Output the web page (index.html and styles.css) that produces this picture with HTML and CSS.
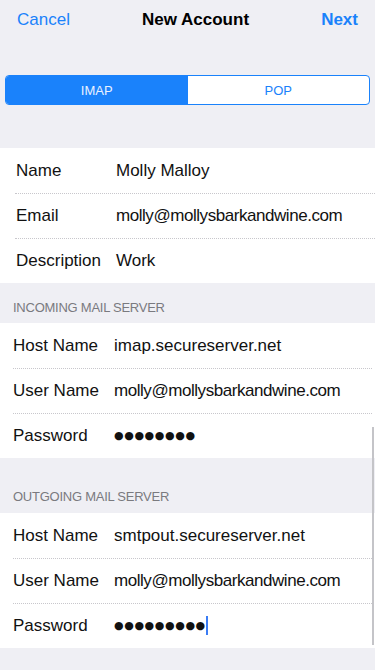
FILE: index.html
```html
<!DOCTYPE html>
<html>
<head>
<meta charset="utf-8">
<link rel="stylesheet" href="styles.css">
</head>
<body>
<div class="screen">
  <header class="nav">
    <span class="nav-btn">Cancel</span>
    <span class="nav-title">New Account</span>
    <span class="nav-btn nav-next">Next</span>
  </header>

  <div class="segmented">
    <div class="seg seg-active">IMAP</div>
    <div class="seg">POP</div>
  </div>

  <section class="group group-first">
    <div class="row"><span class="label">Name</span><span class="value">Molly Malloy</span></div>
    <div class="row"><span class="label">Email</span><span class="value email">molly@mollysbarkandwine.com</span></div>
    <div class="row"><span class="label">Description</span><span class="value">Work</span></div>
  </section>

  <div class="section-header sh-incoming">INCOMING MAIL SERVER</div>
  <section class="group group-server">
    <div class="row"><span class="label">Host Name</span><span class="value">imap.secureserver.net</span></div>
    <div class="row"><span class="label">User Name</span><span class="value email">molly@mollysbarkandwine.com</span></div>
    <div class="row"><span class="label">Password</span><span class="value dots">●●●●●●●●</span></div>
  </section>

  <div class="section-header sh-outgoing">OUTGOING MAIL SERVER</div>
  <section class="group group-server">
    <div class="row"><span class="label">Host Name</span><span class="value">smtpout.secureserver.net</span></div>
    <div class="row"><span class="label">User Name</span><span class="value email">molly@mollysbarkandwine.com</span></div>
    <div class="row"><span class="label">Password</span><span class="value dots">●●●●●●●●●<span class="cursor"></span></span></div>
  </section>

  <div class="scroll-indicator"></div>
</div>
</body>
</html>
```

FILE: styles.css
```css
html, body {
  margin: 0;
  padding: 0;
  background: #efeff4;
}

.screen {
  position: relative;
  width: 375px;
  height: 670px;
  overflow: hidden;
  background: #efeff4;
  font-family: "Liberation Sans", Arial, sans-serif;
  color: #000;
}

.nav {
  height: 40px;
  display: flex;
  align-items: center;
  justify-content: space-between;
  padding: 0 17px;
}

.nav-btn {
  font-size: 17px;
  color: #1a82fb;
}

.nav-next {
  font-weight: bold;
}

.nav-title {
  font-size: 17px;
  font-weight: bold;
  color: #000;
}

.segmented {
  margin: 35px 5px 0 5px;
  height: 30px;
  box-sizing: border-box;
  border: 1px solid #1a82fb;
  border-radius: 4px;
  display: flex;
  overflow: hidden;
  background: #fff;
}

.seg {
  flex: 1;
  display: flex;
  align-items: center;
  justify-content: center;
  font-size: 13px;
  color: #1a82fb;
}

.seg-active {
  background: #1a82fb;
  color: #e8f1ff;
}

.group {
  background: #fff;
}

.group-first {
  margin-top: 43px;
}

.row {
  height: 45px;
  display: flex;
  align-items: center;
  font-size: 17px;
  position: relative;
}

.row + .row::before {
  content: "";
  position: absolute;
  top: 0;
  left: 15px;
  right: 0;
  border-top: 1px dotted #c8c7cc;
}

.group-first .row {
  padding-left: 16px;
}

.group-first .label {
  width: 100px;
}

.group-server .row {
  padding-left: 13px;
}

.group-server .row + .row::before {
  left: 13px;
  right: 3px;
}

.group-server .label {
  width: 101px;
}

.label {
  color: #111;
}

.value {
  color: #111;
  white-space: nowrap;
}

.email {
  letter-spacing: -0.45px;
}

.dots {
  font-family: "DejaVu Sans", sans-serif;
  font-size: 11px;
  letter-spacing: 0.6px;
  display: flex;
  align-items: center;
}

.cursor {
  display: inline-block;
  width: 2px;
  height: 19px;
  background: #3a7cf5;
}

.section-header {
  font-size: 13px;
  letter-spacing: -0.25px;
  color: #7a7a7f;
  padding-left: 13px;
  box-sizing: border-box;
  display: flex;
  align-items: flex-end;
}

.sh-incoming {
  height: 40px;
  padding-bottom: 8px;
}

.sh-outgoing {
  height: 55px;
  padding-bottom: 9px;
}

.scroll-indicator {
  position: absolute;
  left: 372px;
  top: 427px;
  width: 2px;
  height: 218px;
  background: #c4c4c8;
}
```
